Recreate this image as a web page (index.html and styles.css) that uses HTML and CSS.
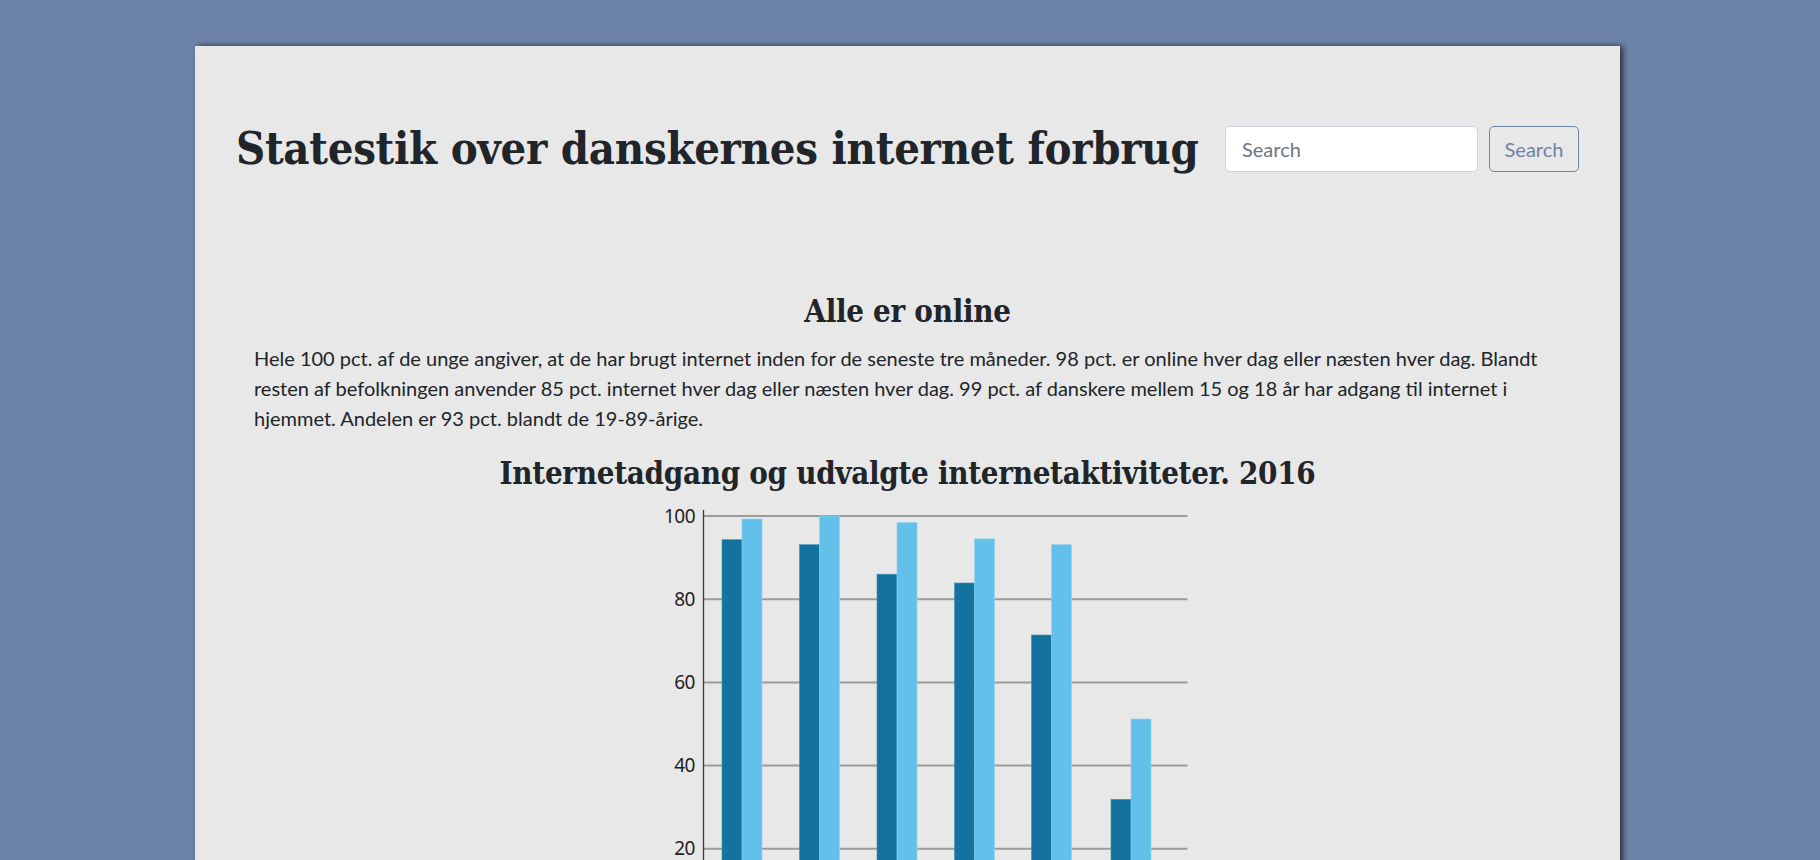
FILE: index.html
```html
<!DOCTYPE html>
<html lang="da">
<head>
<meta charset="utf-8">
<title>Statestik over danskernes internet forbrug</title>
<link rel="stylesheet" href="styles.css">
</head>
<body>
<div class="card">
  <header class="topbar">
    <h1 class="site-title">Statestik over danskernes internet forbrug</h1>
    <form class="search" onsubmit="return false">
      <input class="search-input" type="search" placeholder="Search">
      <button class="search-btn" type="submit">Search</button>
    </form>
  </header>
  <section class="content">
    <h2 class="section-title">Alle er online</h2>
    <p class="lead-text">Hele 100 pct. af de unge angiver, at de har brugt internet inden for de seneste tre måneder. 98 pct. er online hver dag eller næsten hver dag. Blandt resten af befolkningen anvender 85 pct. internet hver dag eller næsten hver dag. 99 pct. af danskere mellem 15 og 18 år har adgang til internet i hjemmet. Andelen er 93 pct. blandt de 19-89-årige.</p>
    <h3 class="chart-title">Internetadgang og udvalgte internetaktiviteter. 2016</h3>
    <figure class="chart">
      <svg class="chart-svg" width="580" height="480" viewBox="0 0 580 480">
        <g class="grid">
          <line x1="85.5" y1="16" x2="569.5" y2="16"/>
          <line x1="85.5" y1="99.2" x2="569.5" y2="99.2"/>
          <line x1="85.5" y1="182.4" x2="569.5" y2="182.4"/>
          <line x1="85.5" y1="265.6" x2="569.5" y2="265.6"/>
          <line x1="85.5" y1="348.8" x2="569.5" y2="348.8"/>
        </g>
        <line class="axis" x1="85.5" y1="10" x2="85.5" y2="432"/>
        <g class="labels">
          <text x="77" y="23">100</text>
          <text x="77" y="106">80</text>
          <text x="77" y="189">60</text>
          <text x="77" y="272">40</text>
          <text x="77" y="355">20</text>
        </g>
        <g class="bars-dark">
          <rect x="104" y="39.7" width="20" height="392.3"/>
          <rect x="181.5" y="44.7" width="20" height="387.3"/>
          <rect x="259" y="74.2" width="20" height="357.8"/>
          <rect x="336.5" y="83" width="20" height="349"/>
          <rect x="413.5" y="135" width="20" height="297"/>
          <rect x="493" y="299.3" width="20" height="132.7"/>
        </g>
        <g class="bars-light">
          <rect x="124" y="19" width="20" height="413"/>
          <rect x="201.5" y="16" width="20" height="416"/>
          <rect x="279" y="22.7" width="20" height="409.3"/>
          <rect x="356.5" y="38.9" width="20" height="393.1"/>
          <rect x="433.5" y="44.7" width="20" height="387.3"/>
          <rect x="513" y="219" width="20" height="213"/>
        </g>
      </svg>
    </figure>
  </section>
</div>
</body>
</html>
```

FILE: styles.css
```css
* { box-sizing: border-box; }

html, body {
  margin: 0;
  padding: 0;
}

body {
  background: #6d84a8;
  font-family: "Lato", "Noto Sans", sans-serif;
  font-size: 20px;
  color: #212529;
  overflow: hidden;
  height: 860px;
}

.card {
  width: 1425px;
  margin: 46px 0 0 195px;
  min-height: 900px;
  background: #e8e8e8;
  box-shadow: 3px 0 6px rgba(0, 0, 0, 0.65);
  padding: 73px 41px 0 41px;
}

.topbar {
  display: flex;
  align-items: center;
  justify-content: space-between;
}

.site-title {
  margin: 0;
  font-family: "DejaVu Serif Condensed", "DejaVu Serif", serif;
  font-weight: bold;
  font-size: 45px;
  line-height: 60px;
  color: #212529;
  letter-spacing: -0.3px;
}

.search {
  display: flex;
  gap: 11px;
  margin: 0;
}

.search-input {
  width: 253px;
  height: 46px;
  border: 1px solid #ced4da;
  border-radius: 5px;
  background: #fff;
  padding: 0 16px;
  font-family: inherit;
  font-size: 20px;
  color: #495057;
  outline: none;
}

.search-input::placeholder {
  color: #6c757d;
}

.search-btn {
  width: 90px;
  height: 46px;
  border: 1px solid #6d84a8;
  border-radius: 5px;
  background: transparent;
  color: #6d84a8;
  font-family: inherit;
  font-size: 20px;
  padding: 0;
}

.content {
  padding: 0 18px;
}

.section-title,
.chart-title {
  margin: 0;
  text-align: center;
  font-family: "DejaVu Serif Condensed", "DejaVu Serif", serif;
  font-weight: bold;
  font-size: 31px;
  line-height: 42px;
  color: #212529;
  letter-spacing: -0.3px;
}

.section-title {
  margin-top: 111px;
}

.lead-text {
  margin: 11px 0 19px;
  line-height: 30px;
}

.chart {
  margin: 6px 0 0;
  display: flex;
  justify-content: center;
}

.chart-svg {
  display: block;
}

.grid line {
  stroke: #9b9b9b;
  stroke-width: 2;
}

.axis {
  stroke: #3a3a3a;
  stroke-width: 1.3;
}

.labels text {
  font-family: "Noto Sans", "Open Sans", sans-serif;
  font-size: 19px;
  fill: #231f20;
  text-anchor: end;
  letter-spacing: -0.5px;
}

.bars-dark rect {
  fill: #14739e;
  stroke: #3a8fb8;
  stroke-width: 0.6;
}

.bars-light rect {
  fill: #62c0ea;
  stroke: #8ad2f2;
  stroke-width: 0.6;
}
```
